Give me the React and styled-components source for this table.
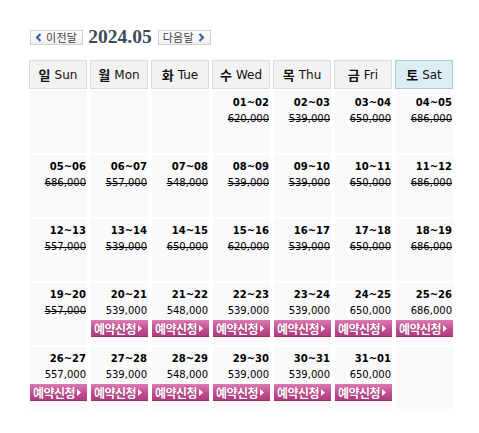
import React from 'react'
import styled, { createGlobalStyle } from 'styled-components'

const GlobalStyle = createGlobalStyle`
  html, body {
    margin: 0;
    padding: 0;
    background: #ffffff;
  }
  body {
    font-family: "DejaVu Sans", "Noto Sans CJK KR", sans-serif;
    color: #000;
  }
`

const Page = styled.div`
  padding: 28px 0 0 30px;
  width: 423px;
`

const Nav = styled.div`
  display: flex;
  align-items: center;
  height: 18px;
  margin-bottom: 14px;
`

const NavButton = styled.button`
  display: flex;
  align-items: center;
  gap: 4px;
  height: 15px;
  padding: 0 5px 0 4px;
  border: 1px solid #cfcfcf;
  background: linear-gradient(#ffffff, #f0f0f0);
  font-family: "Noto Sans CJK KR", sans-serif;
  font-size: 11px;
  letter-spacing: 0.3px;
  color: #444;
  line-height: 13px;
  cursor: pointer;
  svg {
    display: block;
  }
`

const MonthTitle = styled.span`
  font-family: "Liberation Serif", "Times New Roman", serif;
  font-weight: bold;
  font-size: 19.5px;
  color: #3d4a5b;
  margin: 0 6px 0 5px;
  line-height: 18px;
`

const Grid = styled.div`
  display: grid;
  grid-template-columns: repeat(7, 1fr);
  column-gap: 3px;
  row-gap: 2px;
  margin-left: -1px;
`

const HeadCell = styled.div`
  height: 27px;
  display: flex;
  align-items: center;
  justify-content: center;
  gap: 4px;
  border: 1px solid ${(p) => (p.$sat ? '#a9cde0' : '#dcdcdc')};
  background: ${(p) => (p.$sat ? '#dcedf4' : '#f2f2f2')};
  color: #111;
  b {
    font-family: "Noto Sans CJK KR", sans-serif;
    font-weight: bold;
    font-size: 13px;
  }
  span {
    font-family: "DejaVu Sans", sans-serif;
    font-size: 12px;
  }
`

const DayCell = styled.div`
  height: 62px;
  background: #f9f9f9;
  display: flex;
  flex-direction: column;
  align-items: flex-end;
  padding-top: 4px;
  box-sizing: border-box;
  margin-left: 1px;
`

const Range = styled.div`
  font-weight: bold;
  font-size: 10px;
  line-height: 16px;
  padding-right: 1px;
`

const Price = styled.div`
  font-size: 10px;
  line-height: 16px;
  padding-right: 1px;
  text-decoration: ${(p) => (p.$closed ? 'line-through' : 'none')};
`

const ReserveButton = styled.button`
  align-self: stretch;
  height: 17px;
  margin-top: 1px;
  border: 0;
  border-bottom: 1px solid #9c2f6c;
  padding: 0 0 0 3px;
  display: flex;
  align-items: center;
  gap: 2px;
  background: linear-gradient(#dc7ab2, #c04b8e 60%, #b13c80);
  color: #fff;
  font-family: "Noto Sans CJK KR", sans-serif;
  font-weight: bold;
  font-size: 12px;
  letter-spacing: -0.5px;
  cursor: pointer;
  text-shadow: 0 0 1px #8d2a62;
`

const Arrow = ({ dir }) => (
  <svg width="7" height="9" viewBox="0 0 7 9">
    <path
      d={dir === 'left' ? 'M5.5 1 L2 4.5 L5.5 8' : 'M1.5 1 L5 4.5 L1.5 8'}
      stroke="#2a5c9c"
      strokeWidth="2"
      fill="none"
    />
  </svg>
)

const Tri = () => (
  <svg width="4" height="7" viewBox="0 0 4 7">
    <path d="M0 0 L4 3.5 L0 7 Z" fill="#fff" />
  </svg>
)

const heads = [
  ['일', 'Sun'],
  ['월', 'Mon'],
  ['화', 'Tue'],
  ['수', 'Wed'],
  ['목', 'Thu'],
  ['금', 'Fri'],
  ['토', 'Sat'],
]

const days = [
  null, null, null,
  ['01~02', '620,000', 1],
  ['02~03', '539,000', 1],
  ['03~04', '650,000', 1],
  ['04~05', '686,000', 1],
  ['05~06', '686,000', 1],
  ['06~07', '557,000', 1],
  ['07~08', '548,000', 1],
  ['08~09', '539,000', 1],
  ['09~10', '539,000', 1],
  ['10~11', '650,000', 1],
  ['11~12', '686,000', 1],
  ['12~13', '557,000', 1],
  ['13~14', '539,000', 1],
  ['14~15', '650,000', 1],
  ['15~16', '620,000', 1],
  ['16~17', '539,000', 1],
  ['17~18', '650,000', 1],
  ['18~19', '686,000', 1],
  ['19~20', '557,000', 1],
  ['20~21', '539,000', 0],
  ['21~22', '548,000', 0],
  ['22~23', '539,000', 0],
  ['23~24', '539,000', 0],
  ['24~25', '650,000', 0],
  ['25~26', '686,000', 0],
  ['26~27', '557,000', 0],
  ['27~28', '539,000', 0],
  ['28~29', '548,000', 0],
  ['29~30', '539,000', 0],
  ['30~31', '539,000', 0],
  ['31~01', '650,000', 0],
  null,
]

export default function App() {
  return (
    <>
      <GlobalStyle />
      <Page>
        <Nav>
          <NavButton>
            <Arrow dir="left" />
            이전달
          </NavButton>
          <MonthTitle>2024.05</MonthTitle>
          <NavButton>
            다음달
            <Arrow dir="right" />
          </NavButton>
        </Nav>
        <Grid>
          {heads.map(([ko, en], i) => (
            <HeadCell key={en} $sat={i === 6}>
              <b>{ko}</b>
              <span>{en}</span>
            </HeadCell>
          ))}
          {days.map((d, i) => (
            <DayCell key={i}>
              {d && (
                <>
                  <Range>{d[0]}</Range>
                  <Price $closed={d[2] === 1}>{d[1]}</Price>
                  {d[2] === 0 && (
                    <ReserveButton>
                      예약신청
                      <Tri />
                    </ReserveButton>
                  )}
                </>
              )}
            </DayCell>
          ))}
        </Grid>
      </Page>
    </>
  )
}
